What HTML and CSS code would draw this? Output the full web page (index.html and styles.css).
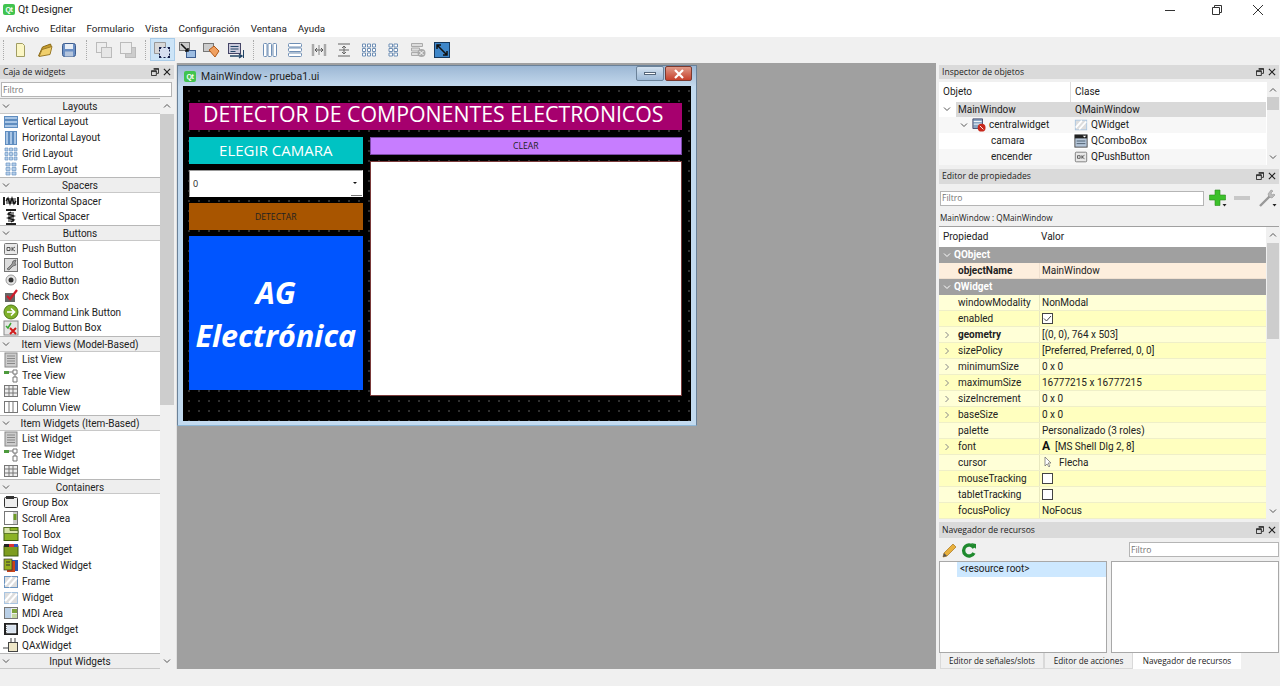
FILE: index.html
```html
<!DOCTYPE html>
<html lang="es">
<head>
	<meta charset="UTF-8">
	<title>Qt Designer</title>
	<link rel="stylesheet" href="styles.css">
</head>
<body>
	<svg class="defs" width="0" height="0">
		<symbol id="down" viewBox="0 0 8 8"><path d="M1 2.500l3 3 3-3" fill="none" stroke="#555" stroke-width="1"/></symbol>
		<symbol id="right" viewBox="0 0 8 8"><path d="M2.500 1l3 3-3 3" fill="none" stroke="#888" stroke-width="1"/></symbol>
		<symbol id="up" viewBox="0 0 8 8"><path d="M1 5.500l3-3 3 3" fill="none" stroke="#555" stroke-width="1"/></symbol>
		<symbol id="float" viewBox="0 0 9 9"><path d="M3 .5h5.500v5.500h-2M.5 3h5.500v5.500h-5.500zM.5 4h5.500M3 1.500h5.500" fill="none" stroke="#222"/></symbol>
		<symbol id="close" viewBox="0 0 9 9"><path d="M1 1l7 7M8 1l-7 7" stroke="#222" stroke-width="1.300"/></symbol>

		<symbol id="vlay" viewBox="0 0 16 16"><g fill="#a9c6e6" stroke="#5f8dc0"><rect x="1.500" y="2.500" width="13" height="3"/><rect x="1.500" y="6.500" width="13" height="3"/><rect x="1.500" y="10.500" width="13" height="3"/></g></symbol>
		<symbol id="hlay" viewBox="0 0 16 16"><g fill="#a9c6e6" stroke="#5f8dc0"><rect x="2.500" y="1.500" width="3" height="13"/><rect x="6.500" y="1.500" width="3" height="13"/><rect x="10.500" y="1.500" width="3" height="13"/></g></symbol>
		<symbol id="grid" viewBox="0 0 16 16"><path d="M2 2h3v3h-3zM6.500 2h3v3h-3zM11 2h3v3h-3zM2 6.500h3v3h-3zM6.500 6.500h3v3h-3zM11 6.500h3v3h-3zM2 11h3v3h-3zM6.500 11h3v3h-3zM11 11h3v3h-3z" fill="#b4cde8" stroke="#6c96c4" stroke-width=".7"/></symbol>
		<symbol id="form" viewBox="0 0 16 16"><path d="M3 2h4v3h-4zM9 2h4v3h-4zM3 6.500h4v3h-4zM9 6.500h4v3h-4zM3 11h4v3h-4zM9 11h4v3h-4z" fill="#b4cde8" stroke="#6c96c4" stroke-width=".7"/></symbol>
		<symbol id="hsp" viewBox="0 0 16 16"><path d="M1 4v8M15 4v8" stroke="#222" stroke-width="2"/><rect x="3" y="5" width="10" height="6" fill="#888"/><path d="M3 8l2-3 2 6 2-6 2 6 2-3" fill="none" stroke="#111" stroke-width="1.300"/></symbol>
		<symbol id="vsp" viewBox="0 0 16 16"><path d="M3 1h10M3 15h10" stroke="#222" stroke-width="2"/><rect x="5" y="3" width="6" height="10" fill="#888"/><path d="M8 3l-3 2 6 2-6 2 6 2-3 2" fill="none" stroke="#111" stroke-width="1.300"/></symbol>
		<symbol id="tool" viewBox="0 0 16 16"><rect x="1.500" y="1.500" width="13" height="13" fill="#ddd" stroke="#777"/><path d="M4 12l5-5 1-3 3-1-1 3 1 2-3 1-4 4z" fill="#999" stroke="#555" stroke-width=".7"/></symbol>
		<symbol id="radio" viewBox="0 0 16 16"><circle cx="8" cy="8" r="5" fill="#e4e4e4" stroke="#999"/><circle cx="8" cy="8" r="2.500" fill="#333"/></symbol>
		<symbol id="check" viewBox="0 0 16 16"><rect x="2" y="5" width="10" height="9" fill="#666"/><path d="M4 8l3 3 7-9" fill="none" stroke="#d01c2c" stroke-width="2.200"/></symbol>
		<symbol id="link" viewBox="0 0 16 16"><circle cx="8" cy="8" r="7" fill="#7fb02a" stroke="#4d7a14"/><path d="M4 8h7M8 4.500l3.500 3.500-3.500 3.500" fill="none" stroke="#fff" stroke-width="1.700"/></symbol>
		<symbol id="dlg" viewBox="0 0 16 16"><rect x="1" y="1" width="14" height="14" fill="#e6e6e6" stroke="#888"/><path d="M3 6l2 2 3-5" fill="none" stroke="#3aa535" stroke-width="1.500"/><path d="M7 8l6 6M13 8l-6 6" stroke="#d01c1c" stroke-width="2"/></symbol>
		<symbol id="list" viewBox="0 0 16 16"><rect x="2" y="1" width="12" height="14" fill="#ccc" stroke="#888"/><path d="M4 4h8M4 6.500h8M4 9h8M4 11.500h8" stroke="#888"/></symbol>
		<symbol id="tree" viewBox="0 0 16 16"><path d="M1 3h5v3h-5z" fill="#4c9a3c"/><path d="M6 4h4M10 2h4v4h-4zM12 6v3M10 9h4v5h-4z" fill="none" stroke="#777"/></symbol>
		<symbol id="table" viewBox="0 0 16 16"><rect x="1.500" y="2.500" width="13" height="11" fill="#eee" stroke="#777"/><path d="M1.500 6h13M1.500 10h13M6 2.500v11M10 2.500v11" stroke="#777"/></symbol>
		<symbol id="col" viewBox="0 0 16 16"><rect x="1.500" y="2.500" width="13" height="11" fill="#fff" stroke="#777"/><path d="M6 2.500v11M10 2.500v11" stroke="#777"/></symbol>
		<symbol id="group" viewBox="0 0 16 16"><rect x="1.500" y="3.500" width="13" height="10" rx="1" fill="#eee" stroke="#333"/><rect x="3" y="2" width="8" height="3" fill="#333"/></symbol>
		<symbol id="scroll" viewBox="0 0 16 16"><rect x="1.500" y="1.500" width="13" height="13" fill="#fff" stroke="#777"/><rect x="10" y="2" width="4" height="12" fill="#ccc"/><rect x="10.500" y="4" width="3" height="6" fill="#6c9a24"/></symbol>
		<symbol id="tbox" viewBox="0 0 16 16"><rect x="1" y="1.500" width="14" height="13" fill="#8cb325" stroke="#3f5c10"/><path d="M1 1.500h6v3h8v3h-14z" fill="#d8e4a8" stroke="#3f5c10" stroke-width=".7"/></symbol>
		<symbol id="tab" viewBox="0 0 16 16"><rect x="1" y="4" width="14" height="10" fill="#7d9c1f" stroke="#3f5c10"/><path d="M1 2h5v3h-5z" fill="#222"/><path d="M6 2h5v3h-5z" fill="#d33"/><path d="M11 2h4v3h-4z" fill="#35b"/></symbol>
		<symbol id="stack" viewBox="0 0 16 16"><rect x="7" y="2" width="8" height="11" fill="#2c57b0"/><rect x="4" y="3" width="8" height="11" fill="#c8441c"/><rect x="1" y="1" width="8" height="11" fill="#98b020" stroke="#333" stroke-width=".7"/><path d="M3 4h4M3 7h4" stroke="#333"/></symbol>
		<symbol id="frame" viewBox="0 0 16 16"><rect x="1.500" y="2.500" width="13" height="11" fill="#ddd" stroke="#6a93c0"/><path d="M2 11l7-8M6 13l8-9" stroke="#fff" stroke-width="2"/></symbol>
		<symbol id="widget" viewBox="0 0 16 16"><rect x="1.500" y="2.500" width="13" height="11" fill="#ddd" stroke="#a8c4e0"/><path d="M2 11l7-8M6 13l8-9" stroke="#fff" stroke-width="2"/></symbol>
		<symbol id="mdi" viewBox="0 0 16 16"><rect x="1.500" y="2.500" width="13" height="11" fill="#eee" stroke="#777"/><path d="M2 3h6v10h-6z" fill="#b9cfe6"/><path d="M9 4h5v4h-5z" fill="#7da33c"/><path d="M9 9h5v4h-5z" fill="#c4d8a0"/></symbol>
		<symbol id="dock" viewBox="0 0 16 16"><rect x="1" y="2" width="14" height="12" fill="#222"/><rect x="3.500" y="4" width="9.500" height="8" fill="#d8e2ee" stroke="#fff" stroke-dasharray="1 1"/></symbol>
		<symbol id="qax" viewBox="0 0 16 16"><rect x="5.500" y="5.500" width="9" height="9" fill="#eee7c8" stroke="#444"/><path d="M0 11h5M8 1v4M12 1v4" stroke="#444"/></symbol>

		<symbol id="tnew" viewBox="0 0 18 18"><path d="M5.500 2.500h6l2 2v11h-8z" fill="#fbf6c4" stroke="#a09c62"/></symbol>
		<symbol id="topen" viewBox="0 0 18 18"><path d="M2.500 15l4-9 8-3 1 3" fill="#c69c2c" stroke="#8a6a18"/><path d="M3 15.500l3-7 10-3-2 8z" fill="#f0cf6c" stroke="#9a7a28"/></symbol>
		<symbol id="tsave" viewBox="0 0 18 18"><rect x="2.500" y="2.500" width="13" height="13" rx="2" fill="#6b8fc4" stroke="#3d5d8f"/><rect x="5" y="3" width="8" height="5" fill="#e8eef6"/><rect x="5" y="10.500" width="8" height="5" fill="#b5c5dc"/></symbol>
		<symbol id="tcopy" viewBox="0 0 18 18"><rect x="1.500" y="1.500" width="10" height="10" fill="#eee" stroke="#bbb"/><rect x="6.500" y="6.500" width="10" height="10" fill="#e6e6e6" stroke="#bbb"/></symbol>
		<symbol id="tback" viewBox="0 0 18 18"><rect x="6.500" y="6.500" width="10" height="10" fill="#ccc" stroke="#bbb"/><rect x="1.500" y="1.500" width="11" height="11" fill="#eee" stroke="#bbb"/></symbol>
		<symbol id="twid" viewBox="0 0 18 18"><path d="M1.500 1.500h11v11h-11z" fill="#d8d8d8" stroke="#999"/><path d="M6.500 6.500h10v10h-10z" fill="#d6dff0" stroke="#16204a" stroke-dasharray="2 2"/><path d="M6 6h2v2h-2zM15 15h2v2h-2zM15 6h2v2h-2zM6 15h2v2h-2z" fill="#16204a"/></symbol>
		<symbol id="tsig" viewBox="0 0 18 18"><rect x="1.500" y="1.500" width="10" height="8" fill="#ccc" stroke="#777"/><rect x="8.500" y="9.500" width="9" height="7" fill="#9dbde2" stroke="#3d5d8f"/><path d="M3 3l7 7M10 7v3h-3" fill="none" stroke="#111" stroke-width="1.500"/></symbol>
		<symbol id="tbud" viewBox="0 0 18 18"><rect x="1.500" y="2.500" width="10" height="8" fill="#ccc" stroke="#777"/><path d="M7 9l5-4 5 5-4 6z" fill="#f0a060" stroke="#b05818"/></symbol>
		<symbol id="thor" viewBox="0 0 18 18"><g fill="#fff" stroke="#6f8fb5"><rect x="2.500" y="2.500" width="3.500" height="13" rx="1"/><rect x="7" y="2.500" width="3.500" height="13" rx="1"/><rect x="12" y="2.500" width="3.500" height="13" rx="1"/></g></symbol>
		<symbol id="tver" viewBox="0 0 18 18"><g fill="#fff" stroke="#6f8fb5"><rect x="2.500" y="2.500" width="13" height="3.500" rx="1"/><rect x="2.500" y="7" width="13" height="3.500" rx="1"/><rect x="2.500" y="12" width="13" height="3.500" rx="1"/></g></symbol>
		<symbol id="tsph" viewBox="0 0 18 18"><path d="M3 3v12M15 3v12" stroke="#aaa" stroke-width="2.500"/><path d="M5 9h8M7 7l-2 2 2 2M11 7l2 2-2 2" fill="none" stroke="#555"/><path d="M9 4v10" stroke="#888"/></symbol>
		<symbol id="tspv" viewBox="0 0 18 18"><path d="M3 3h12M3 15h12" stroke="#aaa" stroke-width="2"/><path d="M9 5v8M7 7l2-2 2 2M7 11l2 2 2-2M4 9h10" fill="none" stroke="#666"/></symbol>
		<symbol id="tgrid" viewBox="0 0 18 18"><path d="M2.500 3h3v3h-3zM7.500 3h3v3h-3zM12.500 3h3v3h-3zM2.500 7.500h3v3h-3zM7.500 7.500h3v3h-3zM12.500 7.500h3v3h-3zM2.500 12h3v3h-3zM7.500 12h3v3h-3zM12.500 12h3v3h-3z" fill="#fff" stroke="#6f8fb5"/></symbol>
		<symbol id="tform" viewBox="0 0 18 18"><path d="M5 3h3.500v3h-3.500zM10 3h3.500v3h-3.500zM5 7.500h3.500v3h-3.500zM10 7.500h3.500v3h-3.500zM5 12h3.500v3h-3.500zM10 12h3.500v3h-3.500z" fill="#fff" stroke="#6f8fb5"/></symbol>
		<symbol id="tbreak" viewBox="0 0 18 18"><path d="M2.500 2.500h11v3h-11zM2.500 7h8v3h-8zM2.500 11.500h8v3h-8z" fill="#ddd" stroke="#aaa"/><circle cx="12.500" cy="12" r="4" fill="#aaa"/><path d="M10.500 10l4 4M14.500 10l-4 4" stroke="#fff"/></symbol>
		<symbol id="tadj" viewBox="0 0 18 18"><rect x="1.500" y="1.500" width="15" height="15" fill="#3f87c9" stroke="#16395e"/><path d="M4 4l10 10M4 8v-4h4M14 10v4h-4" fill="none" stroke="#111" stroke-width="1.500"/></symbol>

		<symbol id="central" viewBox="0 0 16 16"><path d="M1 1h11v11h-11z" fill="#8aa6c4" stroke="#446"/><path d="M2 4h9M2 7h9" stroke="#fff"/><circle cx="11" cy="11" r="4.500" fill="#c8281c"/><path d="M9 9l4 4" stroke="#fff"/></symbol>
		<symbol id="combo" viewBox="0 0 16 16"><rect x="1" y="1" width="14" height="14" fill="#b5c6d9" stroke="#444"/><rect x="1" y="1" width="14" height="4" fill="#222"/><path d="M10 2h4l-2 2z" fill="#fff"/><path d="M3 8h10M3 11h10" stroke="#456"/></symbol>
		<symbol id="plus" viewBox="0 0 18 18"><path d="M6 1h5v5h5.500v5h-5.500v5.500h-5v-5.500h-5.500v-5h5.500z" fill="#3cc12a" stroke="#2b8c1e" stroke-width=".6"/><path d="M13.500 15h4l-2 2.500z" fill="#222"/></symbol>
		<symbol id="wrench" viewBox="0 0 18 18"><path d="M1 17l10-10" stroke="#999" stroke-width="2.400"/><path d="M10 8l-1-3 3-4 2 1-2 2 1 2 2-1 1 1-3 3z" fill="#bbb" stroke="#888" stroke-width=".5"/><path d="M13.500 15h4l-2 2.500z" fill="#222"/></symbol>
		<symbol id="pencil" viewBox="0 0 16 16"><path d="M1 15l1-4 9-9 3 3-9 9z" fill="#e8b03c" stroke="#a8741c" stroke-width=".7"/><path d="M1 15l1-4 3 3z" fill="#555"/></symbol>
		<symbol id="reload" viewBox="0 0 16 16"><path d="M13 6a5.500 5.500 0 1 0 0 5" fill="none" stroke="#1f8a2e" stroke-width="3.400"/><path d="M10 1l5 1v5z" fill="#1f8a2e"/></symbol>
		<symbol id="arrow" viewBox="0 0 10 12"><path d="M2 1v9l2-2 2 3 1-1-2-3h3z" fill="#fff" stroke="#666" stroke-width=".7"/></symbol>
	</svg>

	<div class="titlebar">
		<span class="qt_badge app_icon">Qt</span>
		<span class="app_name">Qt Designer</span>
		<div class="win_btns">
			<svg width="46" height="12" viewBox="0 0 46 12"><path d="M18 6.500h10" stroke="#333"/></svg>
			<svg width="46" height="12" viewBox="0 0 46 12"><path d="M19.500 3.500h7v7h-7zM21.500 3.500v-2h7v7h-2" fill="none" stroke="#333"/></svg>
			<svg width="38" height="12" viewBox="0 0 38 12"><path d="M14 1l10 10M24 1l-10 10" stroke="#333"/></svg>
		</div>
	</div>

	<div class="menubar">
		<span>Archivo</span>
		<span>Editar</span>
		<span>Formulario</span>
		<span>Vista</span>
		<span>Configuración</span>
		<span>Ventana</span>
		<span>Ayuda</span>
	</div>

	<div class="toolbar">
		<i class="handle"></i>
		<b class="tool_btn"><svg><use href="#tnew"/></svg></b>
		<b class="tool_btn"><svg><use href="#topen"/></svg></b>
		<b class="tool_btn"><svg><use href="#tsave"/></svg></b>
		<i class="handle"></i>
		<b class="tool_btn"><svg><use href="#tcopy"/></svg></b>
		<b class="tool_btn"><svg><use href="#tback"/></svg></b>
		<i class="handle"></i>
		<b class="tool_btn active"><svg><use href="#twid"/></svg></b>
		<b class="tool_btn"><svg><use href="#tsig"/></svg></b>
		<b class="tool_btn"><svg><use href="#tbud"/></svg></b>
		<b class="tool_btn"><svg viewBox="0 0 18 18"><rect x="1.500" y="2.500" width="12" height="10" fill="#ccd" stroke="#446"/><path d="M3.500 5.500h8M3.500 8h8M3.500 10.500h5" stroke="#246"/><path d="M3 15h11M12 13l3 2-3 2" fill="none" stroke="#246" stroke-width="1.400"/><path d="M16.500 9v8" stroke="#246"/></svg></b>
		<i class="handle"></i>
		<b class="tool_btn"><svg><use href="#thor"/></svg></b>
		<b class="tool_btn"><svg><use href="#tver"/></svg></b>
		<b class="tool_btn"><svg><use href="#tsph"/></svg></b>
		<b class="tool_btn"><svg><use href="#tspv"/></svg></b>
		<b class="tool_btn"><svg><use href="#tgrid"/></svg></b>
		<b class="tool_btn"><svg><use href="#tform"/></svg></b>
		<b class="tool_btn"><svg><use href="#tbreak"/></svg></b>
		<b class="tool_btn"><svg><use href="#tadj"/></svg></b>
	</div>

	<div class="main">
		<div class="left_dock">
			<div class="dock_title"><span>Caja de widgets</span><svg><use href="#float"/></svg><svg><use href="#close"/></svg></div>
			<input class="filter left_filter" placeholder="Filtro">
			<div class="box_wrap">
				<div class="box_list">
					<div class="cat"><svg><use href="#down"/></svg>Layouts</div>
					<div class="item"><svg><use href="#vlay"/></svg>Vertical Layout</div>
					<div class="item"><svg><use href="#hlay"/></svg>Horizontal Layout</div>
					<div class="item"><svg><use href="#grid"/></svg>Grid Layout</div>
					<div class="item"><svg><use href="#form"/></svg>Form Layout</div>
					<div class="cat"><svg><use href="#down"/></svg>Spacers</div>
					<div class="item"><svg><use href="#hsp"/></svg>Horizontal Spacer</div>
					<div class="item"><svg><use href="#vsp"/></svg>Vertical Spacer</div>
					<div class="cat"><svg><use href="#down"/></svg>Buttons</div>
					<div class="item"><svg viewBox="0 0 16 16"><rect x="1.500" y="2.500" width="13" height="11" rx="1" fill="#e8e8e8" stroke="#777"/><path d="M4 6.500h3v3h-3zM9 6v4M12 6l-3 2 3 2" fill="none" stroke="#555"/></svg>Push Button</div>
					<div class="item"><svg><use href="#tool"/></svg>Tool Button</div>
					<div class="item"><svg><use href="#radio"/></svg>Radio Button</div>
					<div class="item"><svg><use href="#check"/></svg>Check Box</div>
					<div class="item"><svg><use href="#link"/></svg>Command Link Button</div>
					<div class="item"><svg><use href="#dlg"/></svg>Dialog Button Box</div>
					<div class="cat"><svg><use href="#down"/></svg>Item Views (Model-Based)</div>
					<div class="item"><svg><use href="#list"/></svg>List View</div>
					<div class="item"><svg><use href="#tree"/></svg>Tree View</div>
					<div class="item"><svg><use href="#table"/></svg>Table View</div>
					<div class="item"><svg><use href="#col"/></svg>Column View</div>
					<div class="cat"><svg><use href="#down"/></svg>Item Widgets (Item-Based)</div>
					<div class="item"><svg><use href="#list"/></svg>List Widget</div>
					<div class="item"><svg><use href="#tree"/></svg>Tree Widget</div>
					<div class="item"><svg><use href="#table"/></svg>Table Widget</div>
					<div class="cat"><svg><use href="#down"/></svg>Containers</div>
					<div class="item"><svg><use href="#group"/></svg>Group Box</div>
					<div class="item"><svg><use href="#scroll"/></svg>Scroll Area</div>
					<div class="item"><svg><use href="#tbox"/></svg>Tool Box</div>
					<div class="item"><svg><use href="#tab"/></svg>Tab Widget</div>
					<div class="item"><svg><use href="#stack"/></svg>Stacked Widget</div>
					<div class="item"><svg><use href="#frame"/></svg>Frame</div>
					<div class="item"><svg><use href="#widget"/></svg>Widget</div>
					<div class="item"><svg><use href="#mdi"/></svg>MDI Area</div>
					<div class="item"><svg><use href="#dock"/></svg>Dock Widget</div>
					<div class="item"><svg><use href="#qax"/></svg>QAxWidget</div>
					<div class="cat"><svg><use href="#down"/></svg>Input Widgets</div>
				</div>
				<div class="scroll box_scroll">
					<svg><use href="#up"/></svg>
					<div class="thumb"></div>
					<svg><use href="#down"/></svg>
				</div>
			</div>
		</div>

		<div class="mdi">
			<div class="sub_win">
				<div class="sub_title">
					<span class="qt_badge sub_icon">Qt</span>
					<span>MainWindow - prueba1.ui</span>
					<div class="sub_btns">
						<div class="sub_min"></div>
						<div class="sub_close"><svg width="12" height="10" viewBox="0 0 12 10"><path d="M2 1l8 8M10 1l-8 8" stroke="#fff" stroke-width="2.200"/></svg></div>
					</div>
				</div>
				<div class="form_area">
					<div class="form_head">DETECTOR DE COMPONENTES ELECTRONICOS</div>
					<div class="form_cols">
						<div class="form_left">
							<div class="elegir">ELEGIR CAMARA</div>
							<div class="combo">0<span class="combo_arrow"></span></div>
							<div class="detectar">DETECTAR</div>
							<div class="brand">AG<br>Electrónica</div>
						</div>
						<div class="form_right">
							<div class="clear">CLEAR</div>
							<div class="text_out"></div>
						</div>
					</div>
				</div>
			</div>
		</div>

		<div class="right_dock">
			<div class="dock_title"><span>Inspector de objetos</span><svg><use href="#float"/></svg><svg><use href="#close"/></svg></div>
			<div class="inspector">
				<div class="tree_body">
					<div class="tree_row tree_head"><span class="c1">Objeto</span><span class="c2">Clase</span></div>
					<div class="tree_row selected"><span class="c1"><svg class="chev lvl0"><use href="#down"/></svg><em>MainWindow</em></span><span class="c2">QMainWindow</span></div>
					<div class="tree_row alt"><span class="c1"><svg class="chev lvl1"><use href="#down"/></svg><svg class="ic"><use href="#central"/></svg>centralwidget</span><span class="c2"><svg class="ic"><use href="#widget"/></svg>QWidget</span></div>
					<div class="tree_row"><span class="c1 leaf">camara</span><span class="c2"><svg class="ic"><use href="#combo"/></svg>QComboBox</span></div>
					<div class="tree_row alt"><span class="c1 leaf">encender</span><span class="c2"><svg class="ic" viewBox="0 0 16 16"><rect x="1.500" y="2.500" width="13" height="11" rx="1" fill="#e8e8e8" stroke="#777"/><path d="M4 6.500h3v3h-3zM9 6v4M12 6l-3 2 3 2" fill="none" stroke="#555"/></svg>QPushButton</span></div>
				</div>
				<div class="scroll tree_scroll">
					<svg><use href="#up"/></svg>
					<div class="thumb"></div>
					<svg><use href="#down"/></svg>
				</div>
			</div>

			<div class="dock_title second"><span>Editor de propiedades</span><svg><use href="#float"/></svg><svg><use href="#close"/></svg></div>
			<div class="prop_tools">
				<input class="filter" placeholder="Filtro">
				<svg class="plus"><use href="#plus"/></svg>
				<span class="minus"></span>
				<svg class="wrench"><use href="#wrench"/></svg>
			</div>
			<div class="prop_class">MainWindow : QMainWindow</div>
			<div class="props">
				<div class="prop_body">
					<div class="prop prop_head"><span>Propiedad</span><span>Valor</span></div>
					<div class="prop group"><span><svg><use href="#down"/></svg>QObject</span></div>
					<div class="prop peach"><span><b>objectName</b></span><span>MainWindow</span></div>
					<div class="prop group"><span><svg><use href="#down"/></svg>QWidget</span></div>
					<div class="prop y1"><span>windowModality</span><span>NonModal</span></div>
					<div class="prop y2"><span>enabled</span><span><i class="box on"><svg width="11" height="11" viewBox="0 0 11 11"><path d="M2 5.500l2.500 2.500 4.500-5" fill="none" stroke="#444"/></svg></i></span></div>
					<div class="prop y1"><span><svg><use href="#right"/></svg><b>geometry</b></span><span>[(0, 0), 764 x 503]</span></div>
					<div class="prop y2"><span><svg><use href="#right"/></svg>sizePolicy</span><span>[Preferred, Preferred, 0, 0]</span></div>
					<div class="prop y1"><span><svg><use href="#right"/></svg>minimumSize</span><span>0 x 0</span></div>
					<div class="prop y2"><span><svg><use href="#right"/></svg>maximumSize</span><span>16777215 x 16777215</span></div>
					<div class="prop y1"><span><svg><use href="#right"/></svg>sizeIncrement</span><span>0 x 0</span></div>
					<div class="prop y2"><span><svg><use href="#right"/></svg>baseSize</span><span>0 x 0</span></div>
					<div class="prop y1"><span>palette</span><span>Personalizado (3 roles)</span></div>
					<div class="prop y2"><span><svg><use href="#right"/></svg>font</span><span><b class="font_a">A</b>[MS Shell Dlg 2, 8]</span></div>
					<div class="prop y1"><span>cursor</span><span><svg class="cur"><use href="#arrow"/></svg>Flecha</span></div>
					<div class="prop y2"><span>mouseTracking</span><span><i class="box"></i></span></div>
					<div class="prop y1"><span>tabletTracking</span><span><i class="box"></i></span></div>
					<div class="prop y2"><span>focusPolicy</span><span>NoFocus</span></div>
				</div>
				<div class="scroll prop_scroll">
					<svg><use href="#up"/></svg>
					<div class="thumb"></div>
					<svg><use href="#down"/></svg>
				</div>
			</div>

			<div class="dock_title third"><span>Navegador de recursos</span><svg><use href="#float"/></svg><svg><use href="#close"/></svg></div>
			<div class="res_tools">
				<svg><use href="#pencil"/></svg>
				<svg><use href="#reload"/></svg>
				<input class="filter" placeholder="Filtro">
			</div>
			<div class="res_panes">
				<div class="res_pane res_tree"><div class="res_root">&lt;resource root&gt;</div></div>
				<div class="res_pane"></div>
			</div>
			<div class="tabs">
				<span class="tab1">Editor de señales/slots</span>
				<span class="tab2">Editor de acciones</span>
				<span class="tab3">Navegador de recursos</span>
			</div>
		</div>
	</div>
	<div class="statusbar"></div>
</body>
</html>
```

FILE: styles.css
```css
html, body{
	margin: 0;
	height: 686px;
	overflow: hidden;
}
body{
	display: flex;
	flex-direction: column;
	background-color: #f0f0f0;
	font-family: Roboto, "Liberation Sans", sans-serif;
	font-size: 10px;
	color: #222;
}
.defs{
	position: absolute;
}
.qt_badge{
	display: flex;
	align-items: center;
	justify-content: center;
	width: 12px;
	height: 11px;
	border-radius: 2px;
	background-color: #41c44f;
	color: white;
	font-family: "Liberation Sans", sans-serif;
	font-size: 7px;
	font-weight: bold;
	letter-spacing: -0.3px;
}

/* window chrome */
.titlebar{
	display: flex;
	align-items: center;
	height: 19px;
	background-color: white;
	font-size: 10.5px;
}
.app_icon{
	margin: 0 3px 0 3px;
}
.win_btns{
	display: flex;
	margin-left: auto;
	padding-right: 3px;
}
.menubar{
	display: flex;
	align-items: center;
	gap: 11px;
	height: 18px;
	padding-left: 6px;
	background-color: white;
	font-size: 9.9px;
}
.toolbar{
	display: flex;
	align-items: center;
	height: 25px;
	margin-bottom: 1px;
	padding-left: 3px;
}
.handle{
	width: 1px;
	height: 20px;
	box-sizing: border-box;
	margin: 0 4px 0 4.5px;
	border-left: 1px dotted #aaa;
}
.handle:first-child{
	margin-left: 0;
}
.tool_btn{
	display: flex;
	align-items: center;
	justify-content: center;
	width: 24.6px;
	height: 23px;
	box-sizing: border-box;
}
.tool_btn svg{
	width: 18px;
	height: 18px;
}
.tool_btn.active{
	background-color: #cce4f7;
	border: solid 1px #a8cbe8;
}
.main{
	display: flex;
	height: 606px;
}
.statusbar{
	height: 17px;
}

/* docks */
.left_dock{
	display: flex;
	flex-direction: column;
	width: 176px;
	padding-top: 2px;
	box-sizing: border-box;
}
.dock_title{
	display: flex;
	align-items: center;
	gap: 4px;
	height: 14px;
	padding: 0 3px;
	background-color: #dadada;
	font-family: "Open Sans", sans-serif;
	font-size: 8.6px;
}
.left_dock .dock_title{
	margin-right: 2px;
}
.dock_title span{
	flex: 1;
}
.dock_title svg{
	width: 8px;
	height: 8px;
}
.filter{
	box-sizing: border-box;
	height: 15px;
	padding: 0 1px;
	border: solid 1px #b5b5b5;
	background-color: white;
	font-family: "Open Sans", sans-serif;
	font-size: 8.6px;
}
.left_filter{
	width: 171px;
	margin: 3px 0 1px 1px;
}
.box_wrap{
	display: flex;
	flex: 1;
	margin-right: 2px;
	min-height: 0;
}
.box_list{
	flex: 1;
	background-color: white;
}
.cat{
	position: relative;
	height: 15.86px;
	box-sizing: border-box;
	border-top: solid 1px #b8b8b8;
	border-bottom: solid 1px #c8c8c8;
	background-color: #eeeeee;
	line-height: 15px;
	text-align: center;
}
.cat svg{
	position: absolute;
	left: 2px;
	top: 3px;
	width: 8px;
	height: 8px;
}
.item{
	display: flex;
	align-items: center;
	gap: 3px;
	height: 15.86px;
	padding-left: 3px;
	white-space: nowrap;
}
.item svg{
	width: 16px;
	height: 16px;
	flex: none;
}
.scroll{
	display: flex;
	flex-direction: column;
	align-items: center;
	background-color: #f0f0f0;
}
.scroll svg{
	width: 8px;
	height: 8px;
	flex: none;
}
.scroll svg:first-child{
	margin-top: 4px;
}
.scroll svg:last-child{
	margin-top: auto;
	margin-bottom: 4px;
}
.box_scroll{
	width: 14px;
}
.box_scroll .thumb{
	width: 100%;
	height: 291px;
	margin-top: 4px;
	background-color: #cdcdcd;
}

/* designer canvas */
.mdi{
	position: relative;
	flex: 1;
	background-color: #a0a0a0;
	border-left: solid 1px #e0e0e0;
}
.sub_win{
	position: absolute;
	left: 0;
	top: 2px;
	width: 520px;
	height: 361px;
	box-sizing: border-box;
	padding: 0 5px 5px;
	background-color: #c2daef;
	border: solid 1px #6b8299;
	border-bottom-color: #8fb8d8;
}
.sub_title{
	display: flex;
	align-items: center;
	height: 20px;
	margin: 0 -5px;
	padding-left: 6px;
	background: linear-gradient(#9cb7d4, #c3d8ec);
	font-size: 10.5px;
}
.sub_icon{
	margin-right: 5px;
}
.sub_btns{
	display: flex;
	gap: 1px;
	margin: -5px 4px 0 auto;
}
.sub_min{
	display: flex;
	align-items: center;
	justify-content: center;
	width: 28px;
	height: 15px;
	box-sizing: border-box;
	border: solid 1px #6b8299;
	border-radius: 2px;
	background: linear-gradient(#d4e2f0, #9db9d6);
}
.sub_min::after{
	content: "";
	width: 12px;
	height: 3px;
	background-color: white;
	border: solid 1px #56677a;
	box-sizing: border-box;
}
.sub_close{
	display: flex;
	align-items: center;
	justify-content: center;
	width: 27px;
	height: 15px;
	box-sizing: border-box;
	border: solid 1px #7a3a30;
	border-radius: 2px;
	background: linear-gradient(#e09a88, #c6402c);
}
.form_area{
	height: 335px;
	box-sizing: border-box;
	padding: 17px 9px 0 6px;
	background-color: black;
	background-image: radial-gradient(circle, #4a4a4a 0.6px, transparent 0.9px);
	background-size: 10px 10px;
	background-position: 1px 0;
	font-family: "Open Sans", sans-serif;
}
.form_head{
	height: 27px;
	padding-left: 14px;
	background-color: #a6006e;
	color: white;
	font-size: 21.3px;
	line-height: 22px;
	white-space: nowrap;
}
.form_cols{
	display: flex;
	gap: 7px;
	margin-top: 7px;
}
.form_left{
	display: flex;
	flex-direction: column;
	gap: 6px;
	width: 174px;
}
.form_right{
	display: flex;
	flex-direction: column;
	gap: 6px;
	width: 313px;
}
.elegir{
	height: 27px;
	background-color: #00c3c3;
	color: white;
	font-size: 15px;
	line-height: 26px;
	text-align: center;
}
.combo{
	position: relative;
	height: 27px;
	box-sizing: border-box;
	padding-left: 3px;
	background-color: white;
	border: solid 1px;
	border-color: #999 #fff #fff #999;
	font-size: 9px;
	line-height: 25px;
}
.combo_arrow{
	position: absolute;
	right: 5px;
	top: 11px;
	border: solid 2.5px transparent;
	border-top-color: #111;
}
.combo::after{
	content: "";
	position: absolute;
	right: 0;
	bottom: 0;
	width: 11px;
	height: 1px;
	background-color: #777;
}
.detectar{
	height: 27px;
	background-color: #a85500;
	font-size: 8.6px;
	line-height: 29px;
	text-align: center;
}
.brand{
	height: 154px;
	box-sizing: border-box;
	padding-top: 35px;
	background-color: #0055ff;
	color: white;
	font-size: 30.5px;
	font-style: italic;
	font-weight: bold;
	line-height: 43px;
	text-align: center;
	white-space: nowrap;
}
.clear{
	height: 18px;
	box-sizing: border-box;
	background-color: #c77dff;
	border: solid 1px #7d4aa8;
	font-size: 8.6px;
	line-height: 17px;
	text-align: center;
}
.text_out{
	height: 235px;
	box-sizing: border-box;
	background-color: white;
	border: solid 1px #7a3a3a;
}

/* right side */
.right_dock{
	display: flex;
	flex-direction: column;
	width: 344px;
	box-sizing: border-box;
	padding: 2px 1px 0 3px;
}
.dock_title.second{
	margin-top: 4px;
	height: 15px;
}
.dock_title.third{
	margin-top: 3px;
	height: 16px;
}
.inspector{
	display: flex;
	height: 83px;
	margin-top: 3px;
	background-color: white;
}
.tree_body{
	width: 327px;
}
.tree_row{
	display: flex;
	align-items: center;
	height: 16px;
}
.tree_row.tree_head{
	height: 20px;
}
.tree_row.alt{
	background-color: #f7f7f7;
}
.tree_row.selected{
	height: 15px;
	background: linear-gradient(to right, white 17px, #d9d9d9 17px);
}
.c1{
	display: flex;
	align-items: center;
	width: 132px;
	padding-left: 4px;
	box-sizing: border-box;
}
.tree_head .c1{
	border-right: solid 1px #ddd;
	height: 20px;
}
.c1 em{
	font-style: normal;
	margin-left: 7px;
}
.c1.leaf{
	padding-left: 52px;
}
.c2{
	display: flex;
	align-items: center;
	padding-left: 4px;
}
.chev{
	width: 8px;
	height: 8px;
	flex: none;
}
.chev.lvl1{
	margin-left: 17px;
	margin-right: 4px;
}
.ic{
	width: 14px;
	height: 14px;
	margin-right: 3px;
	flex: none;
}
.tree_row .c2 .ic{
	margin-left: -1px;
}
.tree_scroll, .prop_scroll{
	flex: 1;
	margin-left: 1px;
}
.tree_scroll .thumb{
	width: 100%;
	height: 13px;
	margin-top: 3px;
	background-color: #cdcdcd;
}
.prop_tools{
	display: flex;
	align-items: center;
	gap: 4px;
	height: 15px;
	margin-top: 7px;
}
.prop_tools .filter{
	width: 264px;
	margin-left: 1px;
}
.plus{
	width: 18px;
	height: 18px;
	margin-left: 1px;
}
.minus{
	width: 16px;
	height: 4px;
	margin: 0 5px 0 3px;
	background-color: #c8c8c8;
}
.wrench{
	width: 18px;
	height: 18px;
}
.prop_class{
	height: 15px;
	margin-top: 5px;
	border-bottom: solid 1px #a0a0a0;
	font-family: "Open Sans", sans-serif;
	font-size: 8.2px;
	line-height: 14px;
	padding-left: 1px;
}
.props{
	display: flex;
	height: 292px;
}
.prop_body{
	width: 327px;
	background-color: white;
}
.prop{
	display: grid;
	grid-template-columns: 100px 1fr;
	align-items: center;
	height: 16px;
	box-sizing: border-box;
	border-bottom: solid 1px #efefc8;
}
.prop > span{
	display: flex;
	align-items: center;
	padding-left: 19px;
	position: relative;
	white-space: nowrap;
}
.prop > span:nth-child(2){
	padding-left: 2px;
	height: 100%;
	border-left: solid 1px #e8e8c0;
}
.prop > span > svg:not(.cur){
	position: absolute;
	left: 4px;
	top: 2px;
	width: 8px;
	height: 8px;
}
.prop_head{
	height: 20px;
	border-bottom: none;
}
.prop_head > span:first-child{
	padding-left: 4px;
}
.prop_head > span:nth-child(2){
	border-left: none;
}
.prop.group{
	display: block;
	background-color: #a0a0a0;
	color: white;
	font-weight: bold;
	border-bottom: none;
}
.prop.group span{
	height: 100%;
	padding-left: 15px;
}
.prop.group span svg{
	top: 4px;
	filter: brightness(3);
}
.peach{
	background-color: #fdeedd;
	border-bottom-color: #f0e0d0;
}
.peach > span:nth-child(2){
	border-left-color: #f0e0d0;
}
.y1{
	background-color: #ffffd7;
}
.y2{
	background-color: #ffffbf;
}
.box{
	display: block;
	width: 11px;
	height: 11px;
	box-sizing: border-box;
	background-color: white;
	border: solid 1px #444;
}
.box.on{
	line-height: 0;
}
.box svg{
	margin: -1px;
}
.font_a{
	margin-right: 5px;
	font-size: 12px;
	color: #111;
}
.cur{
	width: 10px;
	height: 12px;
	margin: 0 6px 0 1px;
}
.prop_scroll .thumb{
	width: 100%;
	height: 96px;
	margin-top: 4px;
	background-color: #cdcdcd;
}
.res_tools{
	display: flex;
	align-items: center;
	gap: 3px;
	height: 18px;
	margin-top: 3px;
	padding-left: 3px;
}
.res_tools svg{
	width: 16px;
	height: 16px;
}
.res_tools .filter{
	width: 150px;
	margin-left: auto;
}
.res_panes{
	display: flex;
	gap: 4px;
	height: 93px;
	margin-top: 2px;
}
.res_pane{
	width: 168px;
	box-sizing: border-box;
	background-color: white;
	border: solid 1px #a8a8a8;
}
.res_tree{
	padding-left: 17px;
}
.res_root{
	height: 15px;
	padding-left: 3px;
	background-color: #cde8ff;
	line-height: 14px;
}
.tabs{
	display: flex;
	height: 16px;
	padding-left: 1px;
	font-family: "Open Sans", sans-serif;
	font-size: 8.2px;
}
.tabs span{
	line-height: 15px;
	text-align: center;
	background-color: #f0f0f0;
	border: solid 1px #d9d9d9;
	border-top: none;
	box-sizing: border-box;
}
.tabs .tab1{
	width: 104px;
}
.tabs .tab2{
	width: 89px;
}
.tabs .tab3{
	width: 108px;
	background-color: white;
	border: none;
}
```
